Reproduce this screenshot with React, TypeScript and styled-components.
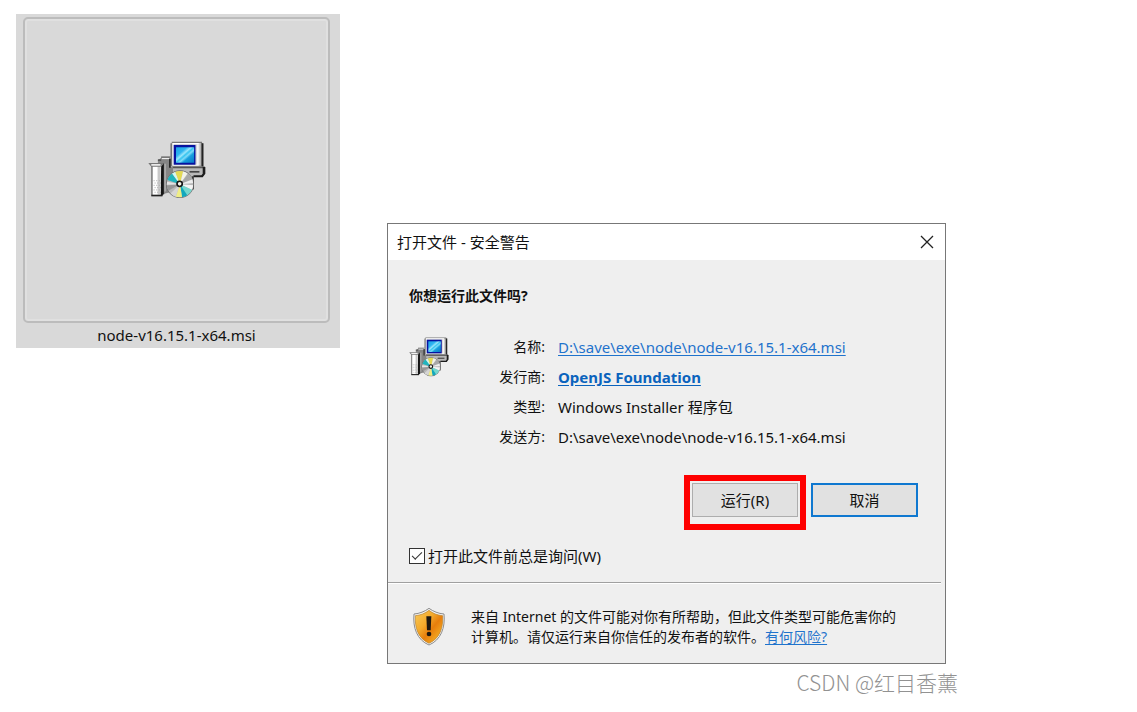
import React from "react";
import styled, { createGlobalStyle } from "styled-components";

const GlobalStyle = createGlobalStyle`
  *, *::before, *::after { box-sizing: border-box; }
  body {
    margin: 0;
    background: #fff;
    color: #111;
    font-family: "Noto Sans", "Noto Sans CJK SC", sans-serif;
    font-size: 15px;
    line-height: 20px;
  }
`;

const Page = styled.main`
  display: flex;
  align-items: flex-start;
  gap: 47px;
  padding: 14px 16px;
`;

const FileTile = styled.figure`
  flex: 0 0 324px;
  margin: 0;
  padding: 3px 10px 3px 7px;
  background: #d9d9d9;
`;

const Thumbnail = styled.div`
  display: flex;
  align-items: center;
  justify-content: center;
  height: 306px;
  border: 2px solid #bcbcbc;
  border-radius: 5px;
  box-shadow: inset 0 0 0 2px #e0e0e0;
`;

const FileName = styled.figcaption`
  padding-top: 2px;
  text-align: center;
`;

const DialogColumn = styled.div`
  flex: 0 1 571px;
  padding-top: 209px;
`;

const Dialog = styled.section`
  margin-right: 12px;
  border: 1px solid #777;
  background: #efefef;
`;

const TitleBar = styled.header`
  display: flex;
  align-items: center;
  justify-content: space-between;
  height: 36px;
  padding: 0 10px 0 9px;
  background: #fff;
`;

const Title = styled.h1`
  margin: 0;
  font-size: 15px;
  font-weight: 400;
`;

const CloseButton = styled.button`
  display: flex;
  padding: 1px;
  border: 0;
  background: none;
`;

const Body = styled.div`
  padding: 26px 27px 16px 21px;
`;

const Question = styled.h2`
  margin: 0 0 26px;
  font-size: 14px;
  line-height: 20px;
  font-weight: 700;
`;

const Info = styled.div`
  display: flex;
  align-items: flex-start;
`;

const FileIcon = styled.div`
  display: flex;
  padding-top: 5px;
`;

const Details = styled.dl`
  flex: 1;
  display: grid;
  grid-template-columns: 96px 1fr;
  column-gap: 13px;
  margin: 0;
  line-height: 30px;
`;

const Term = styled.dt`
  font-size: 14px;
  text-align: right;
`;

const Value = styled.dd`
  margin: 0;
`;

const Link = styled.a<{ $strong?: boolean }>`
  color: ${(p) => (p.$strong ? "#0a63bd" : "#1f73cc")};
  font-weight: ${(p) => (p.$strong ? 700 : 400)};
  text-underline-offset: 2px;
`;

const Actions = styled.div`
  display: flex;
  align-items: flex-start;
  justify-content: flex-end;
  gap: 5px;
  margin-top: 23px;
`;

const Highlight = styled.div`
  padding: 2px 2px 7px;
  border: 6px solid #fe0000;
`;

const Button = styled.button<{ $focused?: boolean }>`
  display: block;
  width: ${(p) => (p.$focused ? 107 : 106)}px;
  height: 34px;
  margin-top: ${(p) => (p.$focused ? 8 : 0)}px;
  padding: 0;
  border: ${(p) => (p.$focused ? "2px solid #0f78d0" : "1px solid #adadad")};
  background: #e1e1e1;
  color: inherit;
  font: inherit;
`;

const AskLabel = styled.label`
  display: flex;
  align-items: center;
  gap: 3px;
  margin-top: 16px;
`;

const CheckBox = styled.input`
  appearance: none;
  width: 16px;
  height: 16px;
  margin: 0;
  border: 1px solid #333;
  background: #fff;
  display: grid;
  place-items: center;

  &:checked::before {
    content: "";
    width: 10px;
    height: 5px;
    margin-bottom: 3px;
    border: solid #333;
    border-width: 0 0 1px 1px;
    transform: rotate(-45deg);
  }
`;

const Warning = styled.footer`
  display: flex;
  align-items: center;
  gap: 25px;
  margin-right: 4px;
  padding: 24px 32px 16px 24px;
  border-top: 1px solid #a0a0a0;
  box-shadow: inset 0 1px 0 #fff;
`;

const WarningText = styled.p`
  flex: 1;
  margin: 0;
  font-size: 14px;
`;

const Watermark = styled.p`
  margin: 4px 0 0;
  color: #929292;
  font-family: "Noto Sans CJK SC", sans-serif;
  font-size: 21px;
  font-weight: 300;
  line-height: 28px;
  text-align: right;
`;

function InstallerIcon({ size, id }: { size: number; id: string }) {
  const vents = [];
  for (let row = 0; row < 6; row++) {
    for (let col = 0; col < 3; col++) {
      vents.push(<rect key={`${row}-${col}`} x={41 + col * 8 + (row % 2) * 3} y={150 + row * 7} width="3" height="3" fill="#aaa" />);
    }
  }
  return (
    <svg width={size} height={size} viewBox="24 31 176 176" aria-hidden="true">
      <defs>
        <linearGradient id={`${id}-screen`} x1="0" y1="0" x2="1" y2="1">
          <stop offset="0" stopColor="#1ba2e6" />
          <stop offset="0.3" stopColor="#2fb5f0" />
          <stop offset="0.42" stopColor="#9be6fb" />
          <stop offset="0.5" stopColor="#35c4f0" />
          <stop offset="0.58" stopColor="#7fdcf8" />
          <stop offset="0.68" stopColor="#18a0de" />
          <stop offset="1" stopColor="#0877c8" />
        </linearGradient>
        <clipPath id={`${id}-disc`}>
          <circle cx="121" cy="162" r="40" />
        </clipPath>
      </defs>
      {/* desktop case behind the monitor */}
      <path d="M98 108H196V130L188 140H98Z" fill="#b9b9b9" />
      <path d="M98 108H196V114H98Z" fill="#555" />
      <path d="M190 110H198V130L190 141H162V135H186L190 130Z" fill="#1c1c1c" />
      <path d="M150 122H180V127H150Z" fill="#444" />
      <path d="M157 138H163V178H157Z" fill="#333" />
      {/* monitor */}
      <path d="M96 33H188V38H192V108H92V38H96Z" fill="#777" />
      <path d="M98 37H184V106H98Z" fill="#cfcfcf" />
      <path d="M98 37H178V41H102V106H98Z" fill="#fff" />
      <path d="M172 41H178V106H102V102H172Z" fill="#f5f5f5" />
      <path d="M187 38H192V108H187Z" fill="#222" />
      <rect x="102" y="43" width="66" height="60" fill="#0712a0" />
      <rect x="109" y="50" width="55" height="47" fill={`url(#${id}-screen)`} />
      {/* tower */}
      <path d="M54 90L66 80H92V110H100V184L76 190L66 198V100H54Z" fill="#858585" />
      <path d="M66 80H92V86H66Z" fill="#eee" />
      <path d="M64 78H92V82H64ZM54 86H64V92H54Z" fill="#555" />
      <path d="M88 84H93V112H88Z" fill="#222" />
      <path d="M64 108L72 98V190L66 198H62Z" fill="#151515" />
      <path d="M76 100V184" stroke="#aaa" strokeWidth="5" />
      <path d="M36 106H62V194H36Z" fill="#fff" />
      <path d="M53 106H62V194H53Z" fill="#c9c9c9" />
      <path d="M34 106H38V196H34Z" fill="#666" />
      {vents}
      <path d="M34 194H68V199H34Z" fill="#222" />
      <path d="M25 98H70V102L62 109H34Z" fill="#777" />
      <path d="M34 101H62V106H34Z" fill="#f2f2f2" />
      {/* disc */}
      <circle cx="121" cy="162" r="42" fill="#6a6a6a" />
      <g clipPath={`url(#${id}-disc)`}>
        <rect x="80" y="120" width="84" height="84" fill="#b8b8b8" />
        <path d="M121 162L78 148V125H94Z" fill="#20b4bd" />
        <path d="M121 162L90 120H106Z" fill="#d6f5f2" />
        <path d="M121 162L104 118H132Z" fill="#e4da55" />
        <path d="M121 162L132 118H152Z" fill="#f3f3e9" />
        <path d="M121 162L152 124L168 150Z" fill="#a8a8a8" />
        <path d="M121 162L168 144V158Z" fill="#eee" />
        <path d="M121 162L168 166V184Z" fill="#f5f5f5" />
        <path d="M121 162L164 182L148 206Z" fill="#74d7cd" />
        <path d="M121 162L150 206H128Z" fill="#11a9bd" />
        <path d="M121 162L128 206H106Z" fill="#efed86" />
        <path d="M121 162L106 206L86 196Z" fill="#d5d5d5" />
        <path d="M121 162L78 186V166Z" fill="#969696" />
        <path d="M121 162L78 164V154Z" fill="#e4e4e4" />
      </g>
      <circle cx="120" cy="161" r="8" fill="#f4f4e8" stroke="#171717" strokeWidth="5" />
    </svg>
  );
}

function ShieldIcon() {
  return (
    <svg width="34" height="40" viewBox="35 36 102 120" aria-hidden="true">
      <defs>
        <linearGradient id="shield-fill" x1="0" y1="0" x2="1" y2="1">
          <stop offset="0" stopColor="#f9ca58" />
          <stop offset="0.38" stopColor="#f3a92b" />
          <stop offset="0.58" stopColor="#e77e0c" />
          <stop offset="1" stopColor="#fbc530" />
        </linearGradient>
      </defs>
      <path d="M86 40C98 49 115 56 131 57C135 98 122 135 86 150C50 135 37 98 41 57C57 56 74 49 86 40Z" fill="#f3f3f3" stroke="#8c8c8c" strokeWidth="3" />
      <path d="M86 46C97 55 112 61 127 62C129 98 119 130 86 145C53 130 43 98 45 62C60 61 75 55 86 46Z" fill="url(#shield-fill)" stroke="#b7802c" strokeWidth="2" />
      <path d="M78 64H93L91 106H80Z" fill="#1d1710" />
      <circle cx="86" cy="117" r="7" fill="#1d1710" />
    </svg>
  );
}

export default function App() {
  return (
    <>
      <GlobalStyle />
      <Page>
        <FileTile>
          <Thumbnail>
            <InstallerIcon size={58} id="large" />
          </Thumbnail>
          <FileName>node-v16.15.1-x64.msi</FileName>
        </FileTile>
        <DialogColumn>
          <Dialog role="dialog" aria-labelledby="dialog-title">
            <TitleBar>
              <Title id="dialog-title">打开文件 - 安全警告</Title>
              <CloseButton type="button" aria-label="关闭">
                <svg width="14" height="14" viewBox="0 0 14 14" stroke="#222" strokeWidth="1.3" aria-hidden="true">
                  <path d="M1 1L13 13M13 1L1 13" />
                </svg>
              </CloseButton>
            </TitleBar>
            <Body>
              <Question>你想运行此文件吗?</Question>
              <Info>
                <FileIcon>
                  <InstallerIcon size={40} id="small" />
                </FileIcon>
                <Details>
                  <Term>名称:</Term>
                  <Value><Link href="#file">D:\save\exe\node\node-v16.15.1-x64.msi</Link></Value>
                  <Term>发行商:</Term>
                  <Value><Link href="#publisher" $strong>OpenJS Foundation</Link></Value>
                  <Term>类型:</Term>
                  <Value>Windows Installer 程序包</Value>
                  <Term>发送方:</Term>
                  <Value>D:\save\exe\node\node-v16.15.1-x64.msi</Value>
                </Details>
              </Info>
              <Actions>
                <Highlight>
                  <Button type="button">运行(R)</Button>
                </Highlight>
                <Button type="button" $focused>取消</Button>
              </Actions>
              <AskLabel>
                <CheckBox type="checkbox" defaultChecked />
                打开此文件前总是询问(W)
              </AskLabel>
            </Body>
            <Warning>
              <ShieldIcon />
              <WarningText>
                来自 Internet 的文件可能对你有所帮助，但此文件类型可能危害你的计算机。请仅运行来自你信任的发布者的软件。<Link href="#risk">有何风险?</Link>
              </WarningText>
            </Warning>
          </Dialog>
          <Watermark>CSDN @红目香薰</Watermark>
        </DialogColumn>
      </Page>
    </>
  );
}
